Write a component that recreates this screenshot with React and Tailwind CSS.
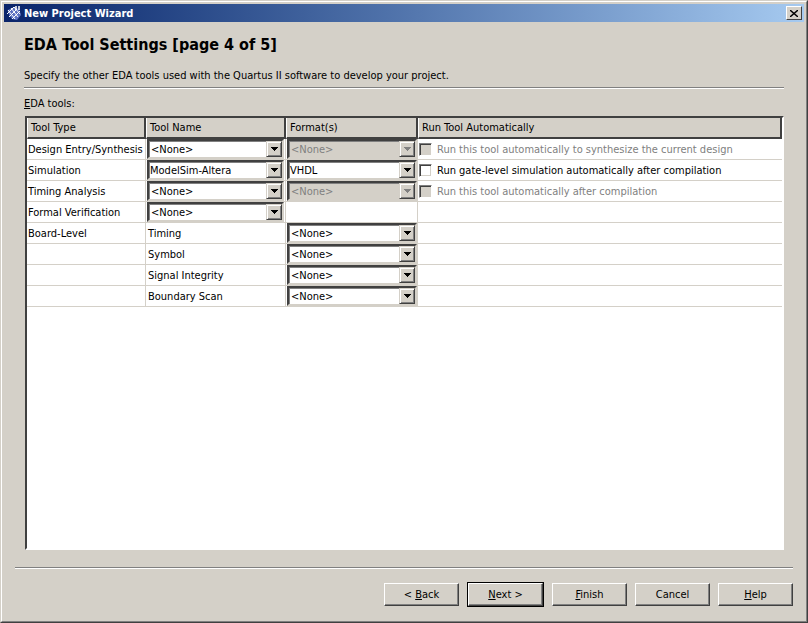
const FONT = "font-['DejaVu_Sans_Condensed','DejaVu_Sans',sans-serif] [font-stretch:condensed]";

function Arrow({ disabled }) {
  return (
    <span className="w-4 h-4 shrink-0 bg-[#d4d0c8] border border-t-[#d4d0c8] border-l-[#d4d0c8] border-r-[#404040] border-b-[#404040] shadow-[inset_1px_1px_0_#ffffff,inset_-1px_-1px_0_#808080] flex items-center justify-center">
      <svg width="7" height="4" viewBox="0 0 7 4">
        <path d="M0 0h7v1H6v1H5v1H4v1H3V3H2V2H1V1H0z" fill={disabled ? "#808080" : "#000000"} />
      </svg>
    </span>
  );
}

function Combo({ value, disabled, tight }) {
  return (
    <div className={`w-[137px] h-5 flex items-center justify-between border-2 border-t-[#404040] border-l-[#404040] border-r-[#d4d0c8] border-b-[#d4d0c8] shadow-[inset_1px_1px_0_#808080] ${disabled ? "bg-[#d4d0c8] text-[#808080]" : "bg-white text-black"}`}>
      <span className={tight ? "pl-px" : "pl-[2px]"}>{value}</span>
      <Arrow disabled={disabled} />
    </div>
  );
}

function Check({ label, disabled }) {
  return (
    <div className="flex items-center gap-[5px] pl-px">
      <span className={`w-[13px] h-[13px] border border-t-[#808080] border-l-[#808080] border-r-white border-b-white shadow-[inset_1px_1px_0_#404040,inset_-1px_-1px_0_#d4d0c8] ${disabled ? "bg-[#d4d0c8]" : "bg-white"}`} />
      <span className={disabled ? "text-[#808080]" : "text-black"}>{label}</span>
    </div>
  );
}

function Cell({ children, last, className = "" }) {
  return (
    <div className={`h-[21px] border-b border-[#d4d0c8] flex items-center ${last ? "" : "border-r"} ${className}`}>
      {children}
    </div>
  );
}

function Head({ children, last }) {
  return (
    <div className={`h-[21px] bg-[#d4d0c8] flex items-center pl-[3px] border-b-2 border-b-[#404040] border-r-2 border-r-[#404040] border-l border-l-white ${last ? "" : ""}`}>
      {children}
    </div>
  );
}

function Btn({ children, primary }) {
  const base = primary
    ? "w-[77px] h-[25px] border border-black"
    : "w-[75px] h-[23px]";
  return (
    <div className={`${base} shrink-0`}>
      <div className="w-full h-full bg-[#d4d0c8] border border-t-white border-l-white border-r-[#404040] border-b-[#404040] shadow-[inset_-1px_-1px_0_#808080] flex items-center justify-center text-black">
        <span>{children}</span>
      </div>
    </div>
  );
}

const rows = [
  ["Design Entry/Synthesis", <Combo value="<None>" />, <Combo value="<None>" disabled />, <Check label="Run this tool automatically to synthesize the current design" disabled />],
  ["Simulation", <Combo value="ModelSim-Altera" tight />, <Combo value="VHDL" tight />, <Check label="Run gate-level simulation automatically after compilation" />],
  ["Timing Analysis", <Combo value="<None>" />, <Combo value="<None>" disabled />, <Check label="Run this tool automatically after compilation" disabled />],
  ["Formal Verification", <Combo value="<None>" />, null, null],
  ["Board-Level", <span className="pl-[1px]">Timing</span>, <Combo value="<None>" />, null],
  ["", <span className="pl-[1px]">Symbol</span>, <Combo value="<None>" />, null],
  ["", <span className="pl-[1px]">Signal Integrity</span>, <Combo value="<None>" />, null],
  ["", <span className="pl-[1px]">Boundary Scan</span>, <Combo value="<None>" />, null],
];

export default function App() {
  return (
    <div className={`${FONT} w-[808px] h-[623px] bg-[#d4d0c8] text-[11px] leading-[13px] text-black border border-[#d4d0c8] border-r-[#404040] border-b-[#404040] overflow-hidden`}>
      <div className="h-full border border-t-white border-l-white border-r-[#808080] border-b-[#808080] p-[2px] flex flex-col">
        <div className="h-[18px] shrink-0 flex items-center justify-between pl-[2px] pr-[2px] bg-gradient-to-r from-[#0a246a] to-[#a6caf0]">
          <div className="flex items-center gap-[2px] text-white font-bold">
            <svg width="16" height="16" viewBox="0 0 16 16">
              <path d="M2 5l6-3 5 2 2 6-4 5-5-1-3-4z" fill="#5a6fc0" />
              <path d="M2 5l7 9M5 3l7 9M8 2l6 7M1 9l7-7M3 12l8-8M6 14l8-8" stroke="#ffffff" strokeWidth="1" fill="none" />
              <path d="M10 1v4M13 1v4" stroke="#ffffff" strokeWidth="1.5" />
            </svg>
            <span>New Project Wizard</span>
          </div>
          <div className="w-4 h-[14px] bg-[#d4d0c8] border border-t-white border-l-white border-r-[#404040] border-b-[#404040] flex items-center justify-center">
            <svg width="8" height="7" viewBox="0 0 8 7">
              <path d="M0 0l8 7M8 0L0 7" stroke="#000000" strokeWidth="1.4" />
            </svg>
          </div>
        </div>

        <div className="flex-1 flex flex-col min-h-0">
          <div className="pl-[20px] pr-[20px] flex flex-col flex-1 min-h-0">
            <h1 className="font-bold text-[16px] leading-[20px] mt-[13px]">EDA Tool Settings [page 4 of 5]</h1>
            <p className="mt-[14px] leading-[13px]">Specify the other EDA tools used with the Quartus II software to develop your project.</p>
            <div className="mt-[5px] h-[2px] border-t border-t-[#808080] border-b border-b-white shrink-0" />
            <div className="mt-[8px] leading-[13px]"><span className="underline">E</span>DA tools:</div>
            <div className="mt-[6px] ml-px h-[434px] w-[759px] bg-white border-2 border-t-[#404040] border-l-[#404040] border-r-white border-b-white shadow-[0_0_0_0_#000] flex flex-col shrink-0">
              <div className="grid grid-cols-[119px_140px_132px_1fr]">
                <Head>Tool Type</Head>
                <Head>Tool Name</Head>
                <Head>Format(s)</Head>
                <Head last>Run Tool Automatically</Head>
              </div>
              <div className="grid grid-cols-[119px_140px_132px_1fr]">
                {rows.map((r, i) => [
                  <Cell key={`${i}a`} className="pl-px">{r[0]}</Cell>,
                  <Cell key={`${i}b`} className="pl-px">{r[1]}</Cell>,
                  <Cell key={`${i}c`} className="pl-px">{r[2]}</Cell>,
                  <Cell key={`${i}d`} last>{r[3]}</Cell>,
                ])}
              </div>
            </div>
          </div>
          <div className="mx-[11px] h-[2px] border-t border-t-[#808080] border-b border-b-white shrink-0 mb-[13px]" />
          <div className="flex items-center justify-end gap-[8px] pr-[11px] mb-[12px] h-[25px]">
            <Btn>&lt; <span className="underline">B</span>ack</Btn>
            <Btn primary><span className="underline">N</span>ext &gt;</Btn>
            <Btn><span className="underline">F</span>inish</Btn>
            <Btn>Cancel</Btn>
            <Btn><span className="underline">H</span>elp</Btn>
          </div>
        </div>
      </div>
    </div>
  );
}
